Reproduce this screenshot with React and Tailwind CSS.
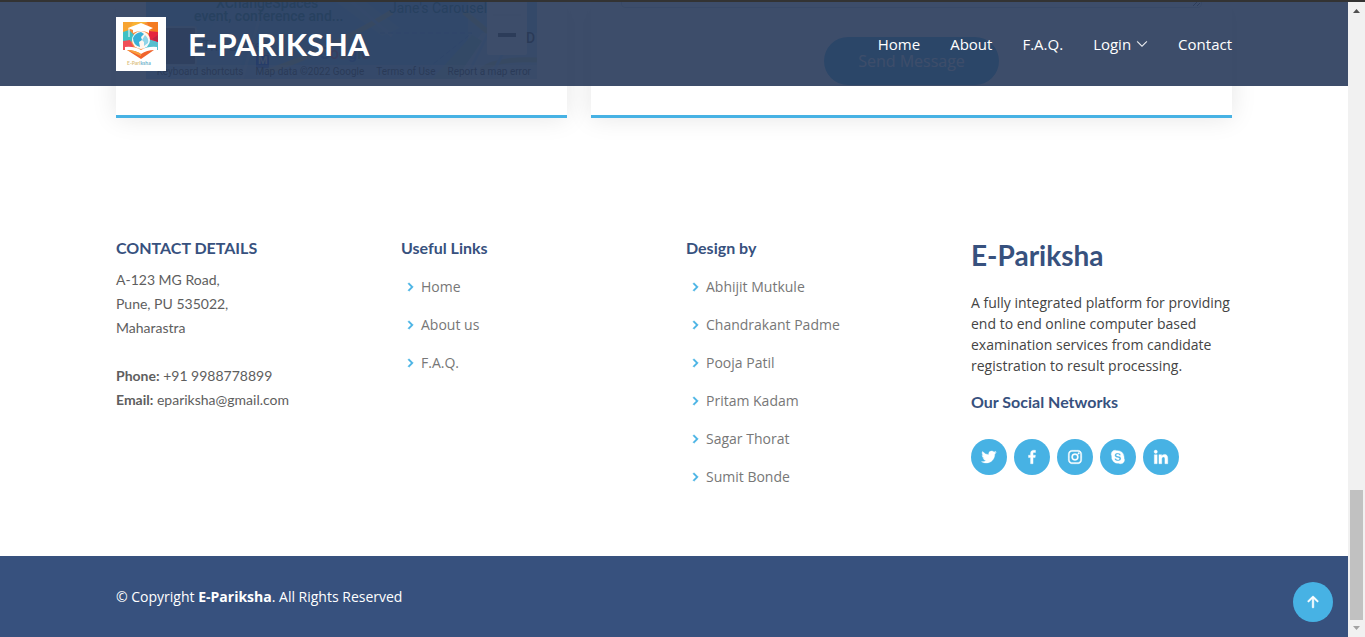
import React from "react";
import {
  BiChevronRight,
  BiLogoTwitter,
  BiLogoFacebook,
  BiLogoInstagram,
  BiLogoSkype,
  BiLogoLinkedin,
} from "react-icons/bi";
import { BsChevronDown, BsArrowUpShort } from "react-icons/bs";

const socials = [
  ["Twitter", BiLogoTwitter],
  ["Facebook", BiLogoFacebook],
  ["Instagram", BiLogoInstagram],
  ["Skype", BiLogoSkype],
  ["LinkedIn", BiLogoLinkedin],
];

const designers = [
  "Abhijit Mutkule",
  "Chandrakant Padme",
  "Pooja Patil",
  "Pritam Kadam",
  "Sagar Thorat",
  "Sumit Bonde",
];

function Logo() {
  return (
    <svg viewBox="0 0 50 54" className="h-[54px] w-[50px] shrink-0" role="img" aria-label="E-Pariksha logo">
      <rect width="50" height="54" fill="#fff" />
      <path d="M7 5h35v28H7z" fill="#f68b3c" />
      <path d="M7 5h10l-4 9-6 3z" fill="#f7a431" />
      <path d="M17 5h14l-6 4-12 4z" fill="#f9b233" />
      <path d="M31 5h11v12l-8-4z" fill="#f47a20" />
      <path d="M7 15l6-2 6 6-5 8-7-3z" fill="#3fc1c4" />
      <path d="M7 24l7-1 5 10H7z" fill="#f04e58" />
      <path d="M33 14l9 1v11l-9-3z" fill="#e5243f" />
      <path d="M32 22l10 3v8H28z" fill="#55bfcf" />
      <path d="M36 22l6-4v7z" fill="#c02545" />
      <path d="M12 11l13-5 12 5-4 2v3q-8-4-16 0v-3z" fill="#fff" />
      <path d="M13 11v9" stroke="#fff" strokeWidth="1" />
      <circle cx="25" cy="23" r="9" fill="#fff" fillOpacity="0.92" />
      <path d="M17 21q2-5 8-6l3 2-3 3 1 3-3 2 1 5q-7-2-7-9z" fill="#37b0d8" />
      <path d="M29 18q4 3 3 8l-4 3v-4l-2-2z" fill="#8fd4e8" />
      <path d="M9 30q9-1 16 3 7-4 16-3v3q-9 0-16 4-7-4-16-4z" fill="#fff" />
      <path d="M11 33q8 0 14 4 6-4 13-4l-13 9z" fill="#f0642d" />
      <path d="M11 33q8 0 14 4v2z" fill="#f9a03c" />
      <text x="11" y="48" fontSize="5" fontWeight="700" fontFamily="Lato, sans-serif" fill="#dcc184">
        E-Pari<tspan fill="#6fb4cb">ksha</tspan>
      </text>
    </svg>
  );
}

function MapPreview() {
  return (
    <div className="relative h-[77px] overflow-hidden bg-[#84c6ff] font-[Roboto,sans-serif] text-[#444444]">
      <svg viewBox="0 0 391 77" preserveAspectRatio="none" className="block h-full w-full" aria-hidden="true">
        <rect width="391" height="77" fill="#84c6ff" />
        <path d="M78 0h40L90 77H40l20-40z" fill="#8fcdf8" />
        <path d="M190 0h30l34 26-18 8z" fill="#96d1f6" />
        <path d="M322 0h69v77H296l26-40z" fill="#a3d6f0" />
        <path d="M300 77l36-46h55v46z" fill="#c3dff0" />
        <path d="M286 77l40-44 10 6-26 38z" fill="#96d4d0" />
        <path d="M120 70q60-20 126-60M318 10l24 20M335 68q16-12 56-10" fill="none" stroke="#c3d2b0" strokeWidth="5" />
        <path d="M118 0L96 77M206 0l40 34M322 72l20-40M345 75l15-30" fill="none" stroke="#a6d4f8" strokeWidth="3" />
        <path d="M234 31h92l-50 40" fill="none" stroke="#6ab0f0" strokeDasharray="5 3" />
        <rect x="18" y="25" width="32" height="38" rx="2" fill="#6d7a90" stroke="#b5cfe8" strokeWidth="2" />
        <rect x="110" y="53" width="13" height="13" rx="1" fill="#1a62ee" />
        <rect x="341" y="-20" width="40" height="73" rx="2" fill="#fff" />
        <path d="M347 13h28" stroke="#e6e6e6" />
        <path d="M352 33h18" stroke="#555" strokeWidth="4" />
      </svg>
      <span className="absolute top-[-7px] left-[70px] text-sm/4 font-medium text-[#1f8090]">XChangeSpaces</span>
      <span className="absolute top-[6px] left-[48px] text-sm/4 font-medium text-[#1f8090]">event, conference and...</span>
      <span className="absolute top-[-2px] left-[243px] text-sm/4 text-[#1f8090]">Jane's Carousel</span>
      <span className="absolute top-[36px] left-[56px] text-sm/4 text-[#4a7aa0]">The Battery</span>
      <span className="absolute top-[53px] left-[112px] text-[11px]/3 font-bold text-white">M</span>
      <span className="absolute top-[42px] left-[173px] text-base/5 font-medium text-[#4a8af0]">
        G<span className="text-[#cc6a80]">o</span>
        <span className="text-[#c0a860]">o</span>g<span className="text-[#60b080]">l</span>
        <span className="text-[#cc6a80]">e</span>
      </span>
      <span className="absolute top-[28px] left-[380px] text-sm/4 font-medium">D</span>
      <div className="absolute inset-x-0 bottom-0 flex h-[14px] items-center justify-end gap-3 bg-white/30 pr-[6px] text-[10px]/3 whitespace-nowrap">
        <span>Keyboard shortcuts</span>
        <span>Map data ©2022 Google</span>
        <span>Terms of Use</span>
        <span>Report a map error</span>
      </div>
    </div>
  );
}

function Header() {
  const link = "flex items-center gap-[5px]";
  return (
    <header className="absolute inset-x-0 top-0 z-10 bg-[#283a5a]/90">
      <div className="mx-auto flex h-[84px] max-w-[1140px] items-center justify-between px-3">
        <a href="#home" className="flex items-center gap-[22px]">
          <Logo />
          <span className="font-[Lato,sans-serif] text-[31px]/9 font-bold text-white">E-PARIKSHA</span>
        </a>
        <nav className="flex gap-[30px] text-[15px]/6 font-medium text-white">
          <a href="#home" className={link}>Home</a>
          <a href="#about" className={link}>About</a>
          <a href="#faq" className={link}>F.A.Q.</a>
          <a href="#login" className={link}>
            Login <BsChevronDown size={12} strokeWidth="0.5" />
          </a>
          <a href="#contact" className={link}>Contact</a>
        </nav>
      </div>
    </header>
  );
}

function LinkItem({ children }) {
  return (
    <li className="flex items-center gap-[2px]">
      <BiChevronRight size={18} strokeWidth="0.6" className="text-[#47b2e4]" aria-hidden="true" />
      <a href="#home" className="text-[#777777]">{children}</a>
    </li>
  );
}

const heading = "font-[Lato,sans-serif] text-base/5 font-bold text-[#37517e]";
const card = "border-b-[3px] border-[#47b2e4] bg-white px-[30px] pb-9 shadow-[0_0_24px_0_rgba(0,0,0,0.1)]";

function Contact() {
  return (
    <section className="mx-auto grid w-full max-w-[1140px] grid-cols-[451fr_641fr] gap-6 px-3">
      <div className={card}>
        <MapPreview />
      </div>
      <form className="flex flex-col items-center justify-between border-b-[3px] border-[#47b2e4] bg-white px-[30px] pb-[30px] shadow-[0_0_24px_0_rgba(0,0,0,0.1)]">
        <label className="sr-only" htmlFor="message">Message</label>
        <textarea id="message" className="-mt-[30px] h-9 w-full rounded border border-[#ced4da]" />
        <button type="button" className="rounded-full bg-[#47b2e4] px-[34px] py-3 text-base/6 text-white">
          Send Message
        </button>
      </form>
    </section>
  );
}

function Footer() {
  return (
    <footer className="flex flex-1 flex-col">
      <div className="mx-auto grid w-full max-w-[1140px] flex-1 grid-cols-4 gap-6 px-3 pt-[120px] pb-[60px] text-sm">
        <div>
          <h4 className={heading}>CONTACT DETAILS</h4>
          <address className="pt-[10px] font-[Lato,sans-serif] text-sm/6 text-[#5e5e5e] not-italic">
            A-123 MG Road,<br />
            Pune, PU 535022,<br />
            Maharastra<br />
            <br />
            <strong>Phone:</strong> +91 9988778899<br />
            <strong>Email:</strong> epariksha@gmail.com
          </address>
        </div>
        <div>
          <h4 className={heading}>Useful Links</h4>
          <ul className="flex flex-col gap-5 pt-5 leading-[18px]">
            <LinkItem>Home</LinkItem>
            <LinkItem>About us</LinkItem>
            <LinkItem>F.A.Q.</LinkItem>
          </ul>
        </div>
        <div>
          <h4 className={heading}>Design by</h4>
          <ul className="flex flex-col gap-5 pt-5 leading-[18px]">
            {designers.map((name) => (
              <LinkItem key={name}>{name}</LinkItem>
            ))}
          </ul>
        </div>
        <div>
          <h3 className="font-[Lato,sans-serif] text-[28px]/[34px] font-bold text-[#37517e]">E-Pariksha</h3>
          <p className="pt-5 leading-[21px] text-[#444444]">
            A fully integrated platform for providing end to end online computer based examination services from
            candidate registration to result processing.
          </p>
          <h4 className={heading + " pt-4"}>Our Social Networks</h4>
          <div className="flex gap-[7px] pt-[27px]">
            {socials.map(([name, Icon]) => (
              <a
                key={name}
                href="#social"
                aria-label={name}
                className="flex size-9 items-center justify-center rounded-full bg-[#47b2e4] text-white"
              >
                <Icon size={18} stroke="currentColor" strokeWidth="0.5" />
              </a>
            ))}
          </div>
        </div>
      </div>
      <div className="bg-[#37517e] py-[30px] text-sm/[21px] text-white">
        <p className="mx-auto max-w-[1140px] px-3">
          © Copyright <strong>E-Pariksha</strong>. All Rights Reserved
        </p>
      </div>
    </footer>
  );
}

function Scrollbar() {
  return (
    <div className="flex w-[17px] shrink-0 flex-col items-center bg-[#f1f1f1]" aria-hidden="true">
      <svg viewBox="0 0 17 17" className="size-[17px]">
        <path d="M5 11h7L8.500 7z" fill="#505050" />
      </svg>
      <div className="flex-[471]" />
      <div className="w-[13px] flex-[130] bg-[#c1c1c1]" />
      <svg viewBox="0 0 17 17" className="size-[17px]">
        <path d="M5 6h7l-3.500 4z" fill="#a3a3a3" />
      </svg>
    </div>
  );
}

export default function App() {
  return (
    <div className="flex min-h-screen flex-col overflow-hidden border-t-2 border-[#333333] bg-white font-['Open_Sans',sans-serif] text-[#444444]">
      <div className="flex flex-1">
        <main className="relative flex min-w-0 flex-1 flex-col overflow-hidden">
          <Header />
          <Contact />
          <Footer />
          <button
            type="button"
            aria-label="Back to top"
            className="absolute right-[15px] bottom-[15px] flex size-10 items-center justify-center rounded-full bg-[#47b2e4] text-white"
          >
            <BsArrowUpShort size={24} strokeWidth="0.4" />
          </button>
        </main>
        <Scrollbar />
      </div>
    </div>
  );
}
